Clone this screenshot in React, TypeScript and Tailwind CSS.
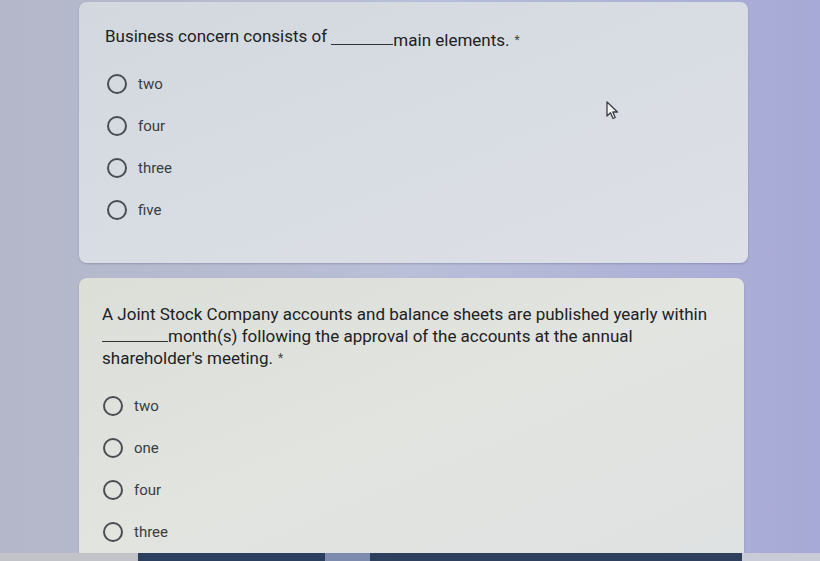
import React from "react";

const first = ["two", "four", "three", "five"];
const second = ["two", "one", "four", "three"];

function Radio({ label }: { label: string }) {
  return (
    <div className="flex h-[42px] items-center gap-[11px]">
      <span className="h-[20px] w-[20px] shrink-0 rounded-full border-2 border-[#4a4d52]" />
      <span className="text-[15px] text-[#3a3c40]">{label}</span>
    </div>
  );
}

function Cursor() {
  return (
    <svg width="14" height="20" viewBox="0 0 14 20" className="absolute left-[606px] top-[101px]">
      <path
        d="M1 1 L1 15 L4.5 11.8 L7 17.5 L9.2 16.5 L6.8 11 L11.5 11 Z"
        fill="#f4f5f6"
        stroke="#3b3e44"
        strokeWidth="1.3"
        strokeLinejoin="round"
      />
    </svg>
  );
}

export default function App() {
  return (
    <div
      className="relative flex h-[561px] w-[820px] flex-col overflow-hidden bg-gradient-to-r from-[#b4b7c9] via-[#b9bfd8] to-[#a7a9d6]"
      style={{ fontFamily: "Roboto, 'Liberation Sans', sans-serif" }}
    >
      <div className="ml-[79px] mt-[2px] h-[261px] w-[669px] shrink-0 rounded-[8px] bg-gradient-to-br from-[#d3d8de] via-[#d8dde3] to-[#dde0e6] px-[26px] pt-[22px] shadow-[0_1px_2px_rgba(80,90,130,0.35)]">
        <p className="text-[17px] leading-[24px] text-[#202124]">
          Business concern consists of{" "}
          <span className="inline-block w-[62px] translate-y-[3px] border-b border-[#303236] align-baseline" />
          <span className="relative top-[4px]">main elements.</span>
          <span className="relative top-[2px] ml-[5px] text-[12px] text-[#444]">*</span>
        </p>
        <div className="mt-[13px] flex flex-col pl-[2px]">
          {first.map((o) => (
            <Radio key={o} label={o} />
          ))}
        </div>
      </div>

      <div className="ml-[79px] mt-[15px] w-[665px] flex-1 rounded-t-[8px] bg-gradient-to-br from-[#dcdfd8] via-[#e1e4df] to-[#dfe2e2] px-[23px] pt-[25px] shadow-[0_1px_2px_rgba(80,90,130,0.35)]">
        <p className="text-[17px] leading-[22px] text-[#202124]">
          A Joint Stock Company accounts and balance sheets are published yearly within
          <br />
          <span className="inline-block w-[66px] border-b border-[#303236]" />
          month(s) following the approval of the accounts at the annual
          <br />
          shareholder's meeting.
          <span className="relative -top-[2px] ml-[5px] text-[12px] text-[#444]">*</span>
        </p>
        <div className="mt-[14px] flex flex-col pl-[1px]">
          {second.map((o) => (
            <Radio key={o} label={o} />
          ))}
        </div>
      </div>

      <div className="flex h-[10px] shrink-0">
        <div className="w-[138px] bg-[#c2c3c8]" />
        <div className="w-[187px] bg-[#2d3f5f]" />
        <div className="w-[45px] bg-[#7d8cae]" />
        <div className="w-[372px] bg-[#2f405f]" />
        <div className="flex-1 bg-[#c9cbd6]" />
      </div>

      <Cursor />
    </div>
  );
}
